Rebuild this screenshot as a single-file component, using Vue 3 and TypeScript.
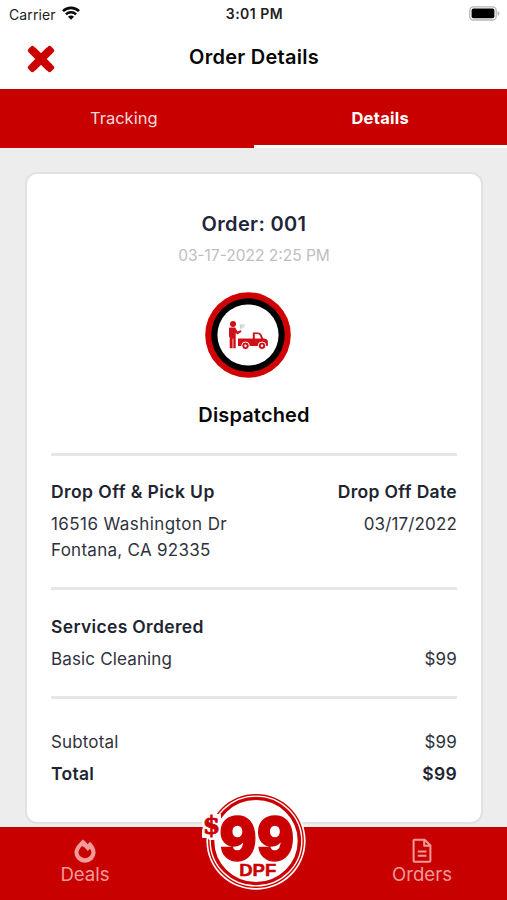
<script setup lang="ts">
import { ref } from 'vue'

type Tab = 'Tracking' | 'Details'

const tabs: Tab[] = ['Tracking', 'Details']
const active = ref<Tab>('Details')

const order = {
  number: '001',
  placed: '03-17-2022 2:25 PM',
  status: 'Dispatched',
  street: '16516 Washington Dr',
  city: 'Fontana, CA 92335',
  dropOff: '03/17/2022',
  services: [{ name: 'Basic Cleaning', price: '$99' }],
  subtotal: '$99',
  total: '$99',
}
</script>

<template>
  <div class="screen">
    <div class="status">
      <div class="carrier">
        <span>Carrier</span>
        <svg class="wifi" viewBox="0 0 18 14" width="18" height="14" fill="none" stroke="#0a0a0a">
          <path d="M1 5.1a11.3 11.3 0 0 1 16 0" stroke-width="2.7" />
          <path d="M3.9 8.3a7.2 7.2 0 0 1 10.2 0" stroke-width="2.4" />
          <path d="M9 13.8 6 10.7a4.2 4.2 0 0 1 6 0Z" fill="#0a0a0a" stroke="none" />
        </svg>
      </div>
      <span class="clock">3:01 PM</span>
      <svg class="battery" viewBox="0 0 31 15" width="31" height="15">
        <rect x="0.8" y="0.8" width="26.4" height="13.2" rx="3.6" fill="#fff" stroke="#b5b5b5" stroke-width="1.3" />
        <rect x="2.6" y="2.6" width="22.8" height="9.6" rx="1.8" fill="#000" />
        <path d="M28.6 5v4.8c1.3-.5 1.9-1.4 1.9-2.4s-.6-1.9-1.9-2.4Z" fill="#b5b5b5" />
      </svg>
    </div>

    <header class="header">
      <button class="close" aria-label="Close">
        <svg viewBox="0 0 28 28" width="28" height="28">
          <path d="M5.2 5.2 22.8 22.8M22.8 5.2 5.2 22.8" stroke="#cb0000" stroke-width="8.2" />
          <path d="M5.4 3.4 3.4 5.4M22.6 3.4l2 2M3.4 22.6l2 2M24.6 22.6l-2 2" stroke="#cb0000" stroke-width="5" stroke-linecap="round" />
        </svg>
      </button>
      <h1>Order Details</h1>
    </header>

    <nav class="tabs">
      <button
        v-for="tab in tabs"
        :key="tab"
        class="tab"
        :class="{ active: tab === active }"
        @click="active = tab"
      >
        <span>{{ tab }}</span>
      </button>
    </nav>

    <main class="content">
      <section class="card">
        <div class="summary">
          <h2>Order: {{ order.number }}</h2>
          <p class="placed">{{ order.placed }}</p>
          <svg class="emblem" viewBox="0 0 86 86" width="86" height="86">
            <circle cx="43" cy="43" r="42.8" fill="#d00203" />
            <circle cx="43" cy="43" r="36.8" fill="#000" />
            <circle cx="43" cy="43" r="30.6" fill="#fff" />
            <g fill="#cf1018">
              <circle cx="28" cy="31.9" r="3" />
              <path d="M24 36.8c0-.8.5-1.2 1.2-1.2h5l2.3 4 3.2-1.4.9 1.5-4.3 2.7-1.6-1.6v15.5h-2.4V46.8h-.7v9.5h-2.9V45.6L24 44.4Z" />
              <path d="M33 46.6h14.8v-6.2h5c2 0 3.2.9 4 2.8l1.3 3 2.8.8c1.4.4 2 1.3 2 2.6v4.4H33Z" />
            </g>
            <path d="M49.8 42h2.8c1.4 0 2 .7 2.6 2.2l.9 2.4h-6.3Z" fill="#fff" />
            <g fill="#cf1018" stroke="#fff" stroke-width="1">
              <circle cx="40.5" cy="53.8" r="3.8" />
              <circle cx="57" cy="53.8" r="3.8" />
            </g>
            <g fill="#fff">
              <circle cx="40.5" cy="53.8" r="1.2" />
              <circle cx="57" cy="53.8" r="1.2" />
            </g>
            <path d="M34.6 33h5.2M35 34.8l4.4.2M36 33l-.3 4.4" stroke="#c4c4c4" stroke-width="1" fill="none" />
          </svg>
          <h3>{{ order.status }}</h3>
        </div>

        <div class="block place">
          <div>
            <h4 class="pickup">Drop Off &amp; Pick Up</h4>
            <p class="street">{{ order.street }}</p>
            <p class="city">{{ order.city }}</p>
          </div>
          <div class="right">
            <h4>Drop Off Date</h4>
            <p>{{ order.dropOff }}</p>
          </div>
        </div>

        <div class="block services">
          <h4>Services Ordered</h4>
          <div v-for="service in order.services" :key="service.name" class="row">
            <span>{{ service.name }}</span>
            <span>{{ service.price }}</span>
          </div>
        </div>

        <div class="block totals">
          <div class="row"><span>Subtotal</span><span>{{ order.subtotal }}</span></div>
          <div class="row total"><span>Total</span><span>{{ order.total }}</span></div>
        </div>
      </section>
    </main>

    <footer class="bottom">
      <a class="item deals">
        <svg viewBox="0 0 24 26" width="24" height="26">
          <path
            d="M9.9 1.4C6.5 4.6 1.4 9.4 1.4 14.6a10.6 10.2 0 0 0 21.2 0c0-4-2.4-8-5.6-10.8l-2.3 2.5C13.4 4.6 11.8 2.8 9.9 1.4Zm1.7 8.2 3.2 3.5 2.2-2.4c.8 1.1 1.4 2.6 1.4 4.1a6.5 6.1 0 0 1-12.9 0c0-2.4 1.7-5 3.5-6.8Z"
            fill="#f39a9a"
            fill-rule="evenodd"
          />
        </svg>
        <span>Deals</span>
      </a>
      <a class="item orders">
        <svg viewBox="0 0 20 26" width="20" height="26" fill="none" stroke="#f39a9a" stroke-width="2" stroke-linejoin="round">
          <path d="M2.6 1.7h10l5.8 5.8v15.2a1 1 0 0 1-1 1H2.6a1 1 0 0 1-1-1v-20a1 1 0 0 1 1-1Z" />
          <path d="M12.2 1.8v5.9h5.9M5.8 13.5h8.6M5.8 17.7h8.6" />
        </svg>
        <span>Orders</span>
      </a>
      <svg class="badge" viewBox="0 0 106 100" width="106" height="100">
        <ellipse cx="54" cy="49" rx="49.6" ry="48.7" fill="#fff" />
        <ellipse cx="54" cy="49" rx="47.2" ry="46.3" fill="none" stroke="#cb0000" stroke-width="1.4" />
        <ellipse cx="54" cy="49" rx="43.4" ry="42.6" fill="none" stroke="#cb0000" stroke-width="3.4" />
        <path d="M6 22.5H18.5V44l-3.5 3.5H7.5L5 45.5H.5v-8l1-1.5-1-2v-6l3-3Z" fill="#fff" stroke="#fff" stroke-linejoin="round" />
        <g class="badge-text">
          <text x="0.8" y="42.3" font-size="24" textLength="17.5" lengthAdjust="spacingAndGlyphs" class="dollar">$</text>
          <text x="17.2" y="67.6" font-size="59.5" textLength="75" lengthAdjust="spacingAndGlyphs" class="price">99</text>
          <text x="37.2" y="83.5" font-size="17" textLength="37" lengthAdjust="spacingAndGlyphs" class="small">DPF</text>
        </g>
      </svg>
    </footer>
  </div>
</template>

<style>
body {
  margin: 0;
  background: #ededed;
}
</style>

<style scoped>
.screen {
  width: 507px;
  height: 900px;
  display: flex;
  flex-direction: column;
  overflow: hidden;
  background: #ededed;
  font-family: Inter, 'Liberation Sans', sans-serif;
  color: #2f323c;
}
h1, h2, h3, h4, p {
  margin: 0;
}
button {
  border: 0;
  padding: 0;
  background: none;
  font: inherit;
  color: inherit;
}
.status {
  height: 28px;
  box-sizing: border-box;
  padding: 0 7px 0 9px;
  display: grid;
  grid-template-columns: 1fr auto 1fr;
  align-items: center;
  background: #fff;
  color: #222;
  font-size: 14px;
}
.carrier {
  display: flex;
  align-items: center;
  gap: 6px;
  letter-spacing: 0.1px;
}
.wifi {
  margin-bottom: 2px;
}
.clock {
  font-weight: 600;
  font-size: 14px;
  letter-spacing: 0.5px;
  margin-bottom: 1px;
}
.battery {
  justify-self: end;
  margin-top: -2px;
}
.header {
  height: 61px;
  display: grid;
  grid-template-columns: 100px 1fr 100px;
  align-items: center;
  background: #fff;
}
.close {
  width: 28px;
  height: 28px;
  margin-left: 27px;
}
.close svg {
  display: block;
}
h1 {
  font-size: 20px;
  line-height: 24px;
  font-weight: 600;
  letter-spacing: 0.25px;
  text-align: center;
  color: #070707;
  margin-bottom: 3px;
  padding-left: 1px;
}
.tabs {
  height: 59px;
  display: grid;
  grid-template-columns: 1fr 1fr;
  background: #c90000;
  color: #fbdada;
}
.tab {
  box-sizing: border-box;
  font-size: 16.5px;
  border-bottom: 3px solid transparent;
  padding-top: 1px;
}
.tab:first-child {
  padding-right: 6px;
}
.tab.active {
  border-bottom-color: #fff;
  font-weight: 700;
  letter-spacing: 0.3px;
  color: #fff;
}
.content {
  flex: 1;
  padding: 24px 24px 3px 25px;
}
.card {
  box-sizing: border-box;
  height: 652px;
  padding: 37px 24px 0;
  border: 2px solid #e1e2e2;
  border-radius: 12px;
  background: #fff;
}
.summary {
  display: flex;
  flex-direction: column;
  align-items: center;
  height: 242px;
}
h2 {
  font-size: 20px;
  line-height: 26px;
  font-weight: 600;
  letter-spacing: 0.35px;
  color: #22243a;
}
.placed {
  margin-top: 9px;
  font-size: 15.5px;
  line-height: 20px;
  color: #bebebe;
}
.emblem {
  margin: 26px 12px 0 0;
}
h3 {
  margin-top: 24px;
  font-size: 20px;
  line-height: 26px;
  font-weight: 600;
  letter-spacing: 0.15px;
  color: #080808;
}
.block {
  border-top: 3px solid #e6e6e6;
  box-sizing: border-box;
  font-size: 17px;
  line-height: 26px;
  letter-spacing: 0.15px;
}
h4 {
  font-size: 17.5px;
  line-height: 26px;
  font-weight: 600;
  letter-spacing: 0.33px;
  color: #202431;
  margin-bottom: 6px;
}
.pickup {
  letter-spacing: 0.42px;
}
.street {
  letter-spacing: 0.42px;
}
.city {
  letter-spacing: 0.28px;
}
.place {
  display: flex;
  justify-content: space-between;
  height: 134px;
  padding-top: 23px;
}
.right {
  text-align: right;
}
.services {
  height: 109px;
  padding-top: 24px;
}
.totals {
  padding-top: 30px;
}
.row {
  display: flex;
  justify-content: space-between;
}
.total {
  margin-top: 6px;
  font-weight: 600;
  font-size: 17.5px;
  color: #202431;
  letter-spacing: 0.3px;
}
.bottom {
  position: relative;
  flex: none;
  height: 73px;
  display: flex;
  justify-content: space-between;
  background: #c90000;
  color: #f39a9a;
}
.item {
  width: 170px;
  display: flex;
  flex-direction: column;
  align-items: center;
  padding-top: 11px;
  font-size: 18.6px;
  line-height: 20px;
}
.item svg {
  display: block;
}
.badge {
  position: absolute;
  left: 202px;
  top: -35px;
}
.badge-text {
  font-family: Inter, sans-serif;
  font-weight: 900;
  fill: #cb0000;
  stroke: #cb0000;
}
.dollar {
  font-family: 'DejaVu Serif', serif;
  font-weight: 700;
  stroke-width: 0.8px;
}
.price {
  stroke-width: 1.4px;
}
.small {
  font-family: 'Liberation Sans', sans-serif;
  font-weight: 700;
  stroke-width: 0.5px;
}
</style>
